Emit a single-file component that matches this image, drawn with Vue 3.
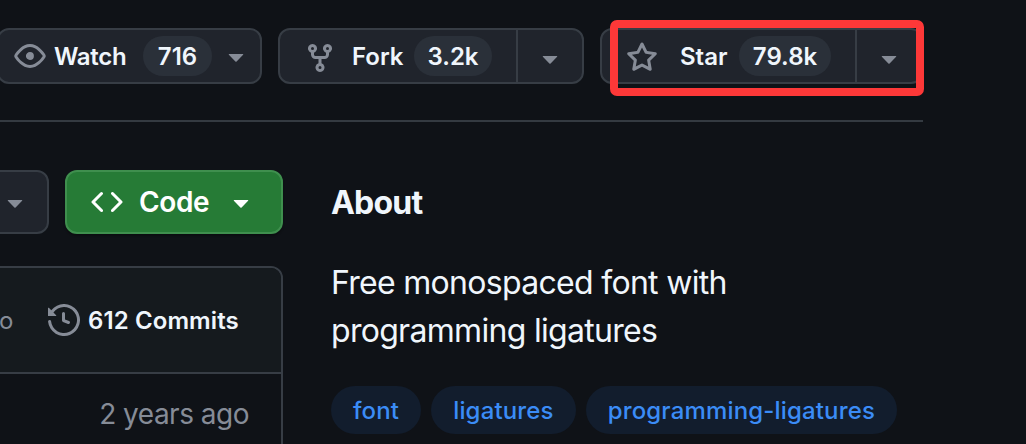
<script setup>
const icons = {
    eye: "M8 2c1.981 0 3.671.992 4.933 2.078 1.27 1.091 2.187 2.345 2.637 3.023a1.62 1.62 0 0 1 0 1.798c-.45.678-1.367 1.932-2.637 3.023C11.67 13.008 9.981 14 8 14c-1.981 0-3.671-.992-4.933-2.078C1.797 10.83.88 9.576.43 8.898a1.62 1.62 0 0 1 0-1.798c.45-.677 1.367-1.931 2.637-3.022C4.33 2.992 6.019 2 8 2ZM1.679 7.932a.12.12 0 0 0 0 .136c.411.622 1.241 1.75 2.366 2.717C5.176 11.758 6.527 12.5 8 12.5c1.473 0 2.825-.742 3.955-1.715 1.124-.967 1.954-2.096 2.366-2.717a.12.12 0 0 0 0-.136c-.412-.621-1.242-1.75-2.366-2.717C10.824 4.242 9.473 3.5 8 3.5c-1.473 0-2.825.742-3.955 1.715-1.124.967-1.954 2.096-2.366 2.717ZM8 10a2 2 0 1 1-.001-3.999A2 2 0 0 1 8 10Z",
    fork: "M5 5.372v.878c0 .414.336.75.75.75h4.5a.75.75 0 0 0 .75-.75v-.878a2.25 2.25 0 1 1 1.5 0v.878a2.25 2.25 0 0 1-2.25 2.25h-1.5v2.128a2.251 2.251 0 1 1-1.5 0V8.5h-1.5A2.25 2.25 0 0 1 3.5 6.25v-.878a2.25 2.25 0 1 1 1.5 0ZM5 3.25a.75.75 0 1 0-1.5 0 .75.75 0 0 0 1.5 0Zm6.75.75a.75.75 0 1 0 0-1.5.75.75 0 0 0 0 1.5Zm-3 8.75a.75.75 0 1 0-1.5 0 .75.75 0 0 0 1.5 0Z",
    star: "M8 .25a.75.75 0 0 1 .673.418l1.882 3.815 4.21.612a.75.75 0 0 1 .416 1.279l-3.046 2.97.719 4.192a.751.751 0 0 1-1.088.791L8 12.347l-3.766 1.98a.75.75 0 0 1-1.088-.79l.72-4.194L.818 6.374a.75.75 0 0 1 .416-1.28l4.21-.611L7.327.668A.75.75 0 0 1 8 .25Zm0 2.445L6.615 5.5a.75.75 0 0 1-.564.41l-3.097.45 2.24 2.184a.75.75 0 0 1 .216.664l-.528 3.084 2.769-1.456a.75.75 0 0 1 .698 0l2.77 1.456-.53-3.084a.75.75 0 0 1 .216-.664l2.24-2.183-3.096-.45a.75.75 0 0 1-.564-.41L8 2.694Z",
    code: "m11.28 3.22 4.25 4.25a.75.75 0 0 1 0 1.06l-4.25 4.25a.749.749 0 0 1-1.275-.326.749.749 0 0 1 .215-.734L13.94 8l-3.72-3.72a.749.749 0 0 1 .326-1.275.749.749 0 0 1 .734.215Zm-6.56 0a.751.751 0 0 1 1.042.018.751.751 0 0 1 .018 1.042L2.06 8l3.72 3.72a.749.749 0 0 1-.326 1.275.749.749 0 0 1-.734-.215L.47 8.53a.75.75 0 0 1 0-1.06Z",
    history: "m.427 1.927 1.215 1.215a8.002 8.002 0 1 1-1.6 5.685.75.75 0 1 1 1.493-.154 6.5 6.5 0 1 0 1.18-4.458l1.358 1.358A.25.25 0 0 1 3.896 6H.25A.25.25 0 0 1 0 5.75V2.104a.25.25 0 0 1 .427-.177ZM7.75 4a.75.75 0 0 1 .75.75v2.992l2.028.812a.75.75 0 0 1-.557 1.392l-2.5-1A.751.751 0 0 1 7 8.25v-3.5A.75.75 0 0 1 7.75 4Z",
    caret: "m4.427 7.427 3.396 3.396a.25.25 0 0 0 .354 0l3.396-3.396A.25.25 0 0 0 11.396 7H4.604a.25.25 0 0 0-.177.427Z"
}

const topics = ["font", "ligatures", "programming-ligatures"]
</script>

<template>
    <div class="page">
        <header class="actions">
            <button class="btn watch">
                <svg class="icon" viewBox="0 0 16 16"><path :d="icons.eye" /></svg>
                <span class="label">Watch</span>
                <span class="counter">716</span>
                <svg class="icon" viewBox="0 0 16 16"><path :d="icons.caret" /></svg>
            </button>
            <div class="btn group fork">
                <button class="main">
                    <svg class="icon low" viewBox="0 0 16 16"><path :d="icons.fork" /></svg>
                    <span class="label">Fork</span>
                    <span class="counter">3.2k</span>
                </button>
                <button class="more">
                    <svg class="icon low" viewBox="0 0 16 16"><path :d="icons.caret" /></svg>
                </button>
            </div>
            <div class="btn group star">
                <button class="main">
                    <svg class="icon low" viewBox="0 0 16 16"><path :d="icons.star" /></svg>
                    <span class="label">Star</span>
                    <span class="counter">79.8k</span>
                </button>
                <button class="more">
                    <svg class="icon low" viewBox="0 0 16 16"><path :d="icons.caret" /></svg>
                </button>
                <div class="highlight"></div>
            </div>
        </header>

        <main class="content">
            <section class="files">
                <div class="toolbar">
                    <button class="btn add">
                        <svg class="icon" viewBox="0 0 16 16"><path :d="icons.caret" /></svg>
                    </button>
                    <button class="btn code">
                        <svg class="icon" viewBox="0 0 16 16"><path :d="icons.code" /></svg>
                        <span class="label">Code</span>
                        <svg class="icon" viewBox="0 0 16 16"><path :d="icons.caret" /></svg>
                    </button>
                </div>
                <div class="table">
                    <div class="table-head">
                        <span class="when">o</span>
                        <svg class="icon" viewBox="0 0 16 16"><path :d="icons.history" /></svg>
                        <span class="commits">612 Commits</span>
                    </div>
                    <div class="table-row">
                        <span class="age">2 years ago</span>
                    </div>
                </div>
            </section>

            <aside class="about">
                <h2>About</h2>
                <p>Free monospaced font with<br>programming ligatures</p>
                <div class="topics">
                    <a v-for="topic of topics" :key="topic" class="topic">{{ topic }}</a>
                </div>
            </aside>
        </main>
    </div>
</template>

<style>
body {
    margin: 0;
    background: #0f1217;
}
</style>

<style scoped>
.page {
    width: 1026px;
    height: 444px;
    overflow: hidden;
    background: #0f1217;
    color: #f0f6fc;
    font-family: Inter, "Liberation Sans", sans-serif;
}

.page * {
    box-sizing: border-box;
}

button {
    display: flex;
    align-items: center;
    margin: 0;
    padding: 0;
    border: 0;
    background: none;
    color: inherit;
    font: inherit;
    text-align: left;
}

.icon {
    flex: none;
    display: block;
    width: 32px;
    height: 32px;
    fill: #868c97;
}

.icon.low {
    margin-top: 4px;
}

.label,
.counter,
.commits,
.when,
.age,
.topic {
    flex: none;
    white-space: nowrap;
}

.actions {
    display: flex;
    gap: 16px;
    width: 923px;
    height: 122px;
    padding-top: 28px;
    border-bottom: 2px solid #343a41;
}

.btn {
    flex: none;
    display: flex;
    align-items: center;
    height: 56px;
    border: 2px solid #373d45;
    border-radius: 12px;
    background: #20242c;
    font-size: 24px;
    font-weight: 600;
}

.watch {
    width: 265px;
    margin-left: -3px;
    padding-left: 15px;
}

.watch .label {
    width: 89px;
    padding-left: 8px;
    letter-spacing: -.3px;
}

.counter {
    display: flex;
    align-items: center;
    justify-content: center;
    height: 40px;
    border-radius: 20px;
    background: #2a3039;
}

.watch .counter {
    width: 69px;
    margin: 0 8px 0 8px;
}

.main {
    height: 52px;
    padding-left: 24px;
    border-right: 2px solid #373d45;
}

.more {
    flex: 1;
    justify-content: center;
    height: 52px;
}

.fork {
    width: 306px;
}

.fork .main {
    width: 238px;
}

.fork .label {
    width: 78px;
    padding-left: 16px;
}

.fork .counter {
    width: 78px;
}

.star {
    position: relative;
    width: 323px;
}

.star .main {
    width: 255px;
}

.star .label {
    width: 81px;
    padding-left: 22px;
}

.star .counter {
    width: 92px;
}

/* red frame drawn over the star button */
.highlight {
    position: absolute;
    top: -10px;
    left: 8px;
    width: 314px;
    height: 76px;
    border: 8px solid #fd3838;
    border-radius: 7px;
}

.content {
    display: flex;
    gap: 48px;
    padding-top: 48px;
}

.files {
    flex: none;
    width: 283px;
}

.toolbar {
    display: flex;
    gap: 16px;
}

.toolbar .btn {
    height: 64px;
}

.add {
    width: 61px;
    margin-left: -12px;
    padding-left: 9px;
}

.code {
    width: 218px;
    padding-left: 24px;
    border-color: #3f8f4e;
    background: #267b36;
    box-shadow: 0 2px 2px rgba(0, 0, 0, .3);
    color: #fff;
    font-size: 28px;
}

.code .icon {
    fill: #fff;
}

.code .label {
    width: 102px;
    padding-left: 16px;
    letter-spacing: -.4px;
}

.table {
    height: 200px;
    margin-top: 32px;
    margin-left: -16px;
    border: 2px solid #373d45;
    border-radius: 12px;
    overflow: hidden;
}

.table-head {
    display: flex;
    align-items: center;
    height: 106px;
    padding-left: 13px;
    border-bottom: 2px solid #373d45;
    background: #151a1e;
    font-size: 24px;
}

.when {
    width: 49px;
    color: #868c97;
}

.commits {
    padding-left: 8px;
    font-weight: 600;
    letter-spacing: .1px;
}

.age {
    color: #868c97;
    font-size: 28px;
    letter-spacing: -.5px;
}

.table-row {
    display: flex;
    align-items: center;
    justify-content: flex-end;
    height: 80px;
    padding-right: 32px;
}

.about h2 {
    margin: 0;
    font-size: 32px;
    font-weight: 700;
    line-height: 48px;
    letter-spacing: -.8px;
    padding-top: 9px;
}

.about p {
    margin: 32px 0 0;
    font-size: 32px;
    line-height: 48px;
    letter-spacing: -.7px;
    white-space: nowrap;
}

.topics {
    display: flex;
    gap: 10px;
    margin-top: 31px;
}

.topic {
    display: flex;
    align-items: center;
    height: 48px;
    padding: 0 22px;
    border-radius: 24px;
    background: #121d2d;
    color: #3b8cf6;
    font-size: 24px;
    font-weight: 500;
    letter-spacing: .16px;
}
</style>
